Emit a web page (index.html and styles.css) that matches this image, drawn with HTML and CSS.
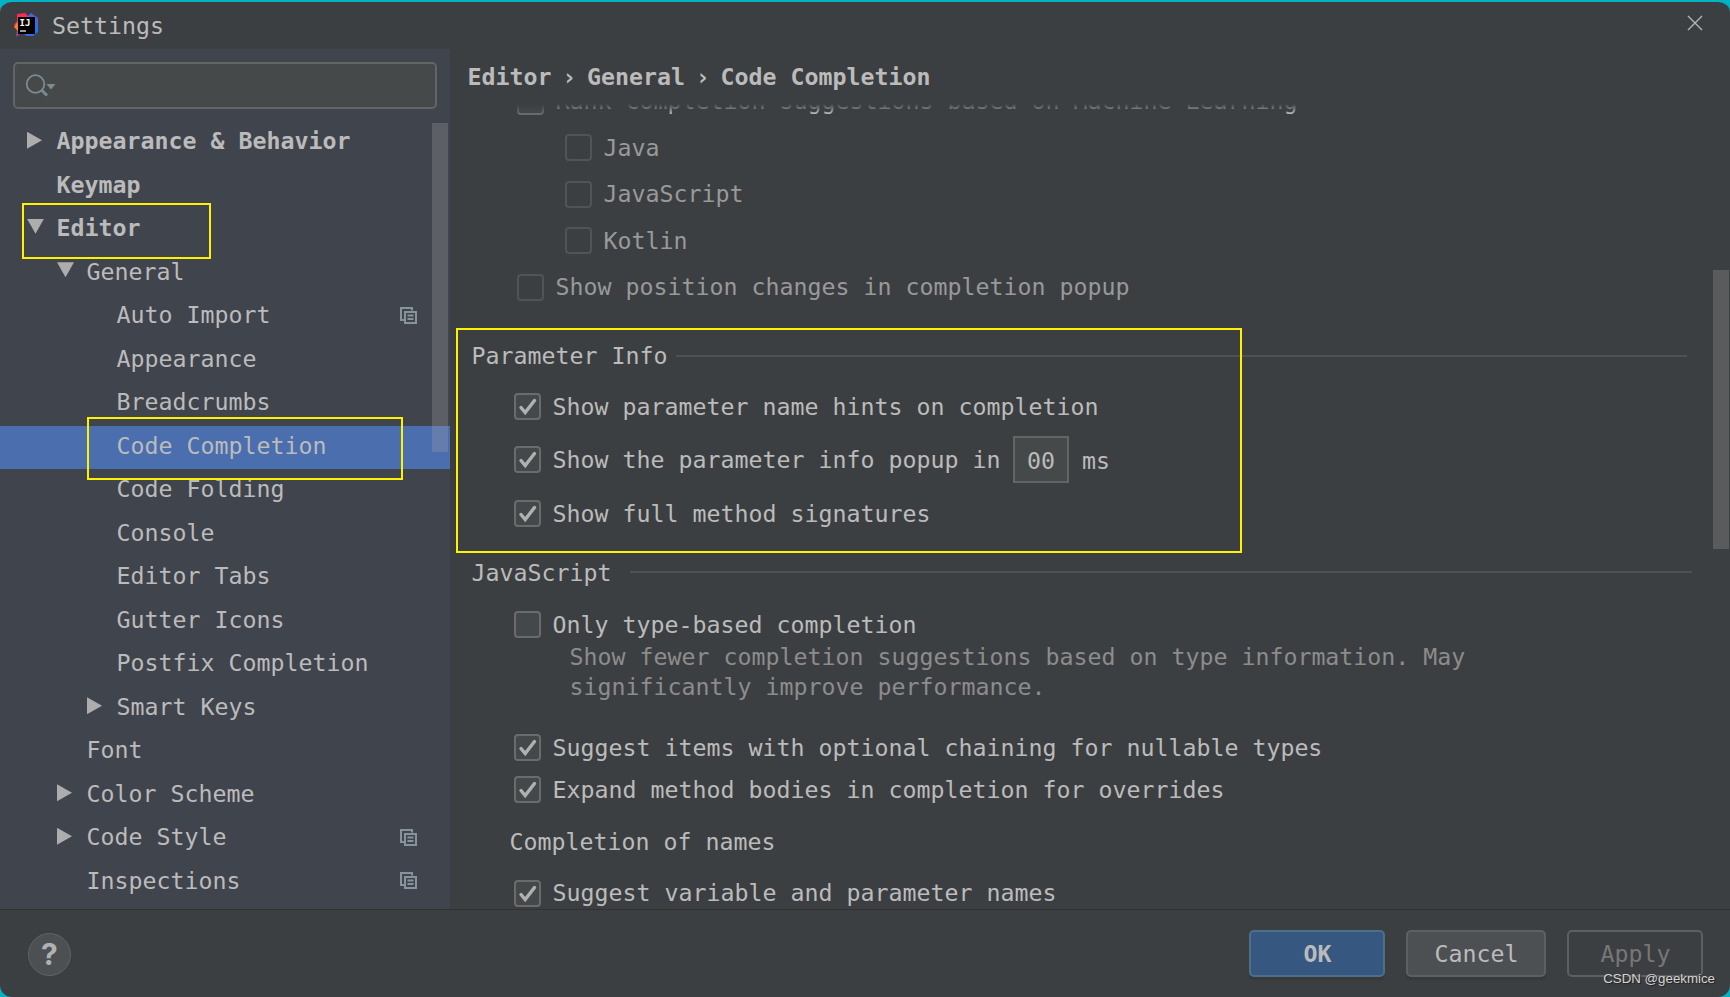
FILE: index.html
```html
<!DOCTYPE html>
<html lang="en">
<head>
    <meta charset="UTF-8">
    <title>Settings</title>
    <link rel="stylesheet" href="styles.css">
</head>
<body>
    <svg width="0" height="0" class="defs">
        <symbol id="copy" viewBox="0 0 17 17">
            <path d="M4 13H1V1h11v2.500M5 5h11v11H5zM7.500 8.500h6M7.500 12h6" fill="none" stroke="#87939a" stroke-width="2"/>
        </symbol>
        <symbol id="tick" viewBox="0 0 27 27">
            <path d="M7 14.5l4.2 5L20.5 7.5" fill="none" stroke="#b0b0b0" stroke-width="3.4" stroke-linecap="round"/>
        </symbol>
    </svg>
    <div id="window">
        <div class="title">
            <svg class="logo" width="25" height="25" viewBox="0 0 25 25">
                <defs>
                    <linearGradient id="g1" x1="0" y1="0" x2="0" y2="1">
                        <stop offset="0" stop-color="#fe2857"/><stop offset=".6" stop-color="#f0386b"/><stop offset="1" stop-color="#a033c8"/>
                    </linearGradient>
                    <linearGradient id="g2" x1="0" y1="0" x2="1" y2="1">
                        <stop offset="0" stop-color="#2f6df0"/><stop offset=".5" stop-color="#5b5bd8"/><stop offset="1" stop-color="#087cfa"/>
                    </linearGradient>
                </defs>
                <path d="M3 1l8-1 4 4-2 14-6 2-5 4 1-7-3-5 3-4z" fill="url(#g1)"/>
                <path d="M0 14l4-5v9z" fill="#fc801d"/>
                <path d="M13 4l4-4 7 5v14l-5 4h-6l-5-3z" fill="url(#g2)"/>
                <path d="M4 4h17v17H4z" fill="#000"/>
                <text x="5.500" y="13" class="ij">IJ</text>
                <path d="M6 18h6" stroke="#ccc" stroke-width="1.400"/>
            </svg>
            <span>Settings</span>
            <svg class="close" width="16" height="16" viewBox="0 0 16 16">
                <path d="M1 1l14 14M15 1L1 15" stroke="#b4b4b4" stroke-width="1.4"/>
            </svg>
        </div>
        <div class="middle">
            <div class="side">
                <div class="search">
                    <svg width="32" height="26" viewBox="0 0 32 26">
                        <circle cx="10.5" cy="11" r="8.8" fill="none" stroke="#7d8a92" stroke-width="1.8"/>
                        <path d="M16.5 17l5.500 5.5" stroke="#7d8a92" stroke-width="2.8"/>
                        <path d="M21.500 11h9l-4.500 5.500z" fill="#7d8a92"/>
                    </svg>
                </div>
                <ul class="tree">
                    <li class="b"><i class="shut"></i>Appearance &amp; Behavior</li>
                    <li class="b"><i></i>Keymap</li>
                    <li class="b"><i class="open"></i>Editor</li>
                    <li class="l1"><i class="open"></i>General</li>
                    <li class="l2"><i></i>Auto Import<svg class="copy"><use href="#copy"/></svg></li>
                    <li class="l2"><i></i>Appearance</li>
                    <li class="l2"><i></i>Breadcrumbs</li>
                    <li class="l2 on"><i></i>Code Completion</li>
                    <li class="l2"><i></i>Code Folding</li>
                    <li class="l2"><i></i>Console</li>
                    <li class="l2"><i></i>Editor Tabs</li>
                    <li class="l2"><i></i>Gutter Icons</li>
                    <li class="l2"><i></i>Postfix Completion</li>
                    <li class="l2"><i class="shut"></i>Smart Keys</li>
                    <li class="l1"><i></i>Font</li>
                    <li class="l1"><i class="shut"></i>Color Scheme</li>
                    <li class="l1"><i class="shut"></i>Code Style<svg class="copy"><use href="#copy"/></svg></li>
                    <li class="l1"><i></i>Inspections<svg class="copy"><use href="#copy"/></svg></li>
                </ul>
                <div class="bar side-bar"></div>
            </div>
            <div class="main">
                <div class="crumbs">Editor<span>›</span>General<span>›</span>Code Completion</div>
                <div class="content">
                    <div class="ranking">
                        <div class="row"><b class="box"></b>Rank completion suggestions based on Machine Learning</div>
                        <div class="row sub off"><b class="box"></b>Java</div>
                        <div class="row sub off"><b class="box"></b>JavaScript</div>
                        <div class="row sub off"><b class="box"></b>Kotlin</div>
                        <div class="row off"><b class="box"></b>Show position changes in completion popup</div>
                    </div>
                    <div class="head">Parameter Info<hr></div>
                    <div class="params">
                        <div class="row"><b class="box"><svg><use href="#tick"/></svg></b>Show parameter name hints on completion</div>
                        <div class="row mid"><b class="box"><svg><use href="#tick"/></svg></b>Show the parameter info popup in<span class="field">00</span><span class="ms">ms</span></div>
                        <div class="row"><b class="box"><svg><use href="#tick"/></svg></b>Show full method signatures</div>
                    </div>
                    <div class="head js">JavaScript<hr></div>
                    <div class="options">
                        <div class="row"><b class="box"></b>Only type-based completion</div>
                        <p>Show fewer completion suggestions based on type information. May<br>significantly improve performance.</p>
                        <div class="row"><b class="box"><svg><use href="#tick"/></svg></b>Suggest items with optional chaining for nullable types</div>
                        <div class="row"><b class="box"><svg><use href="#tick"/></svg></b>Expand method bodies in completion for overrides</div>
                        <h4>Completion of names</h4>
                        <div class="row"><b class="box"><svg><use href="#tick"/></svg></b>Suggest variable and parameter names</div>
                    </div>
                </div>
                <div class="bar main-bar"></div>
            </div>
        </div>
        <div class="foot">
            <div class="help">?</div>
            <div class="btns">
                <div class="btn ok">OK</div>
                <div class="btn cancel">Cancel</div>
                <div class="btn apply">Apply</div>
            </div>
        </div>
        <div class="mark mark1"></div>
        <div class="mark mark2"></div>
        <div class="mark mark3"></div>
        <div class="water">CSDN @geekmice</div>
    </div>
</body>
</html>
```

FILE: styles.css
```css
*{
    margin: 0;
    padding: 0;
    box-sizing: border-box;
    list-style: none;
}
body{
    background: #00b4c4;
    overflow: hidden;
    font-family: "DejaVu Sans Mono", monospace;
    font-size: 23.25px;
    line-height: 30px;
    color: #bbb;
    white-space: nowrap;
}
.defs{
    position: absolute;
}
#window{
    position: relative;
    width: 1730px;
    height: 997px;
    display: flex;
    flex-direction: column;
    background: #3c3f41;
    border-top: 2px solid #00b4c4;
    border-radius: 12px;
    overflow: hidden;
}
.title{
    height: 47px;
    display: flex;
    align-items: center;
    padding: 0 27px 0 14px;
}
.title span{
    margin: 1px 0 0 13px;
}
.ij{
    font-size: 9px;
    font-weight: bold;
    fill: #fff;
}
.close{
    margin: 0 0 5px auto;
}
.middle{
    height: 860px;
    display: flex;
}
.side{
    position: relative;
    width: 450px;
    background: #40444d;
    padding-top: 13px;
}
.search{
    width: 424px;
    height: 47px;
    margin-left: 13px;
    border: 2px solid #646464;
    border-radius: 5px;
    background: #45494a;
    padding: 9px 0 0 10px;
}
.search svg{
    display: block;
}
.tree{
    padding-top: 12px;
}
.tree li{
    height: 43.5px;
    display: flex;
    align-items: center;
    padding: 0 33px 3px 26px;
}
.tree .b{
    font-weight: bold;
}
.tree .l1{
    padding-left: 56px;
}
.tree .l2{
    padding-left: 86px;
}
.tree .on{
    background: #4b6eaf;
}
.tree i{
    width: 30.5px;
    height: 19px;
}
.tree i:before{
    content: '';
    display: block;
    margin-left: 1px;
    background: #adadad;
}
.tree .shut:before{
    width: 15px;
    height: 17px;
    clip-path: polygon(0 0,100% 50%,0 100%);
}
.tree .open:before{
    width: 17px;
    height: 15px;
    clip-path: polygon(0 0,100% 0,50% 100%);
}
.copy{
    width: 17px;
    height: 17px;
    margin-left: auto;
}
.bar{
    position: absolute;
    width: 16px;
    background: rgba(166,166,166,.28);
}
.side-bar{
    left: 432px;
    top: 74px;
    height: 329px;
}
.main{
    position: relative;
    flex: 1;
    overflow: hidden;
}
.crumbs{
    height: 55px;
    padding: 13px 0 0 17.5px;
    font-weight: bold;
}
.crumbs span{
    display: inline-block;
    width: 35.5px;
    text-align: center;
}
.content{
    position: relative;
    height: 805px;
    overflow: hidden;
}
.content:before{
    content: '';
    position: absolute;
    left: 0;
    right: 0;
    top: 0;
    height: 10px;
    background: linear-gradient(#3c3f41,rgba(60,63,65,0));
}
.row{
    height: 46.5px;
    display: flex;
    align-items: center;
}
.box{
    width: 27px;
    height: 27px;
    margin-right: 11.5px;
    border: 2px solid #6b6b6b;
    border-radius: 4px;
    background: #43494a;
}
.box svg{
    display: block;
    width: 27px;
    height: 27px;
    margin: -2px;
}
.ranking{
    margin-top: -26px;
    padding-left: 67px;
}
.sub{
    padding-left: 48px;
}
.off{
    color: #999;
}
.off .box{
    background: none;
    border-color: #525354;
}
.head{
    height: 30px;
    margin-top: 30.5px;
    padding: 0 43px 0 21.5px;
    display: flex;
    align-items: center;
}
.head hr{
    flex: 1;
    height: 2px;
    margin: 0 0 0 9px;
    border: 0;
    background: #515151;
}
.params{
    padding: 9px 0 0 64px;
}
.params .row{
    height: 53.5px;
}
.params .mid{
    padding-bottom: 1px;
}
.field{
    width: 56px;
    height: 47px;
    margin-left: 12.5px;
    padding-top: 8px;
    border: 2px solid #646464;
    background: #45494a;
    text-align: center;
}
.ms{
    margin: 3px 0 0 13px;
}
.js{
    margin-top: 17px;
    padding-right: 38px;
}
.js hr{
    margin: 0 0 1px 19px;
}
.options{
    padding: 16px 0 0 64px;
}
.options .row{
    height: 42px;
}
.options p{
    padding-left: 55.5px;
    margin: -4px 0 25px;
    color: #8c8c8c;
}
.options h4{
    font-size: 23.25px;
    font-weight: normal;
    margin: 16.5px 0 15px -4.5px;
}
.main-bar{
    right: 1px;
    top: 221px;
    height: 279px;
    background: #595b5d;
}
.foot{
    flex: 1;
    display: flex;
    justify-content: space-between;
    padding: 21px 27px 0 28px;
    border-top: 1px solid #323232;
}
.help{
    width: 43px;
    height: 43px;
    margin-top: 2px;
    border: 1px solid #616466;
    border-radius: 50%;
    background: #4c5052;
    color: #afb1b3;
    text-align: center;
    font-family: Inter, sans-serif;
    font-weight: bold;
    font-size: 30px;
    line-height: 41px;
}
.btns{
    display: flex;
    gap: 21px;
    margin-top: -1px;
}
.btn{
    width: 136px;
    height: 47px;
    border: 2px solid #5e6060;
    border-radius: 5px;
    background: #4c5052;
    line-height: 43px;
    text-align: center;
    text-indent: 1px;
    box-shadow: 0 3px 1px #37393b;
}
.ok{
    border-color: #4c708c;
    background: #365880;
    font-weight: bold;
}
.cancel{
    width: 140px;
}
.apply{
    background: none;
    color: #777;
    box-shadow: none;
}
.mark{
    position: absolute;
    border: 2px solid #fff200;
}
.mark1{
    left: 22px;
    top: 201px;
    width: 189px;
    height: 56px;
}
.mark2{
    left: 87px;
    top: 415px;
    width: 316px;
    height: 63px;
}
.mark3{
    left: 456px;
    top: 326px;
    width: 786px;
    height: 225px;
}
.water{
    position: absolute;
    right: 15px;
    top: 968px;
    font-family: "Liberation Sans", sans-serif;
    font-size: 13.3px;
    line-height: 18px;
    color: #d4d4d4;
    text-shadow: 1px 1px 1px #222;
}
```
